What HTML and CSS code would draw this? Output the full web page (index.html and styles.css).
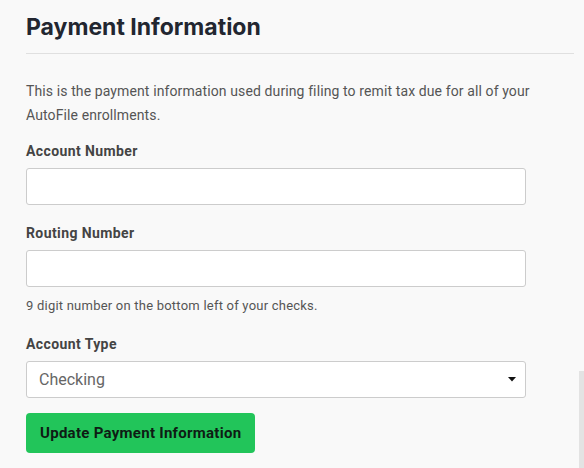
FILE: index.html
```html
<!DOCTYPE html>
<html>
<head>
<meta charset="utf-8">
<link rel="stylesheet" href="styles.css">
</head>
<body>
<div class="page">
  <h1 class="title">Payment Information</h1>
  <hr class="divider">
  <p class="intro">This is the payment information used during filing to remit tax due for all of your AutoFile enrollments.</p>
  <form class="form">
    <div class="field">
      <label class="label">Account Number</label>
      <input class="input" type="text">
    </div>
    <div class="field">
      <label class="label">Routing Number</label>
      <input class="input" type="text">
      <div class="hint">9 digit number on the bottom left of your checks.</div>
    </div>
    <div class="field">
      <label class="label">Account Type</label>
      <div class="select">
        <span class="select-value">Checking</span>
        <svg class="caret" width="8" height="5" viewBox="0 0 8 5"><path d="M0 0H8L4 4.5Z" fill="#111"/></svg>
      </div>
    </div>
    <button class="btn" type="button">Update Payment Information</button>
  </form>
</div>
<div class="scrollbar"></div>
</body>
</html>
```
FILE: styles.css
```css
html, body {
  margin: 0;
  padding: 0;
  background: #f9f9f9;
  height: 100%;
  overflow: hidden;
}
body {
  font-family: "Roboto", "Liberation Sans", sans-serif;
  color: #555;
  position: relative;
}
.page {
  padding: 13px 10px 0 26px;
  width: 548px;
}
.title {
  margin: 0;
  font-family: "Inter", "Roboto", sans-serif;
  font-weight: 700;
  font-size: 23px;
  line-height: 28px;
  color: #222630;
}
.divider {
  margin: 12px 0 0 0;
  border: 0;
  border-top: 1px solid #e0e0e0;
}
.intro {
  margin: 25px 0 0 0;
  width: 530px;
  font-size: 14px;
  letter-spacing: 0.11px;
  line-height: 24px;
  color: #555;
}
.form {
  margin-top: 14px;
}
.field {
  display: flex;
  flex-direction: column;
}
.label {
  font-size: 14px;
  font-weight: 700;
  letter-spacing: 0.4px;
  line-height: 20px;
  color: #444;
  margin-bottom: 7px;
}
.input {
  box-sizing: border-box;
  width: 500px;
  height: 37px;
  margin: 0;
  border: 1px solid #ccc;
  border-radius: 3px;
  background: #fff;
}
.field + .field {
  margin-top: 18px;
}
.hint {
  font-size: 13px;
  letter-spacing: 0.22px;
  line-height: 20px;
  margin-top: 9px;
  color: #555;
}
.select {
  box-sizing: border-box;
  width: 500px;
  height: 37px;
  border: 1px solid #ccc;
  border-radius: 3px;
  background: #fff;
  display: flex;
  align-items: center;
  justify-content: space-between;
  padding: 0 9px 0 12px;
}
.select-value {
  font-size: 16px;
  color: #666;
}
.btn {
  margin-top: 15px;
  height: 40px;
  padding: 0 14px;
  border: 0;
  border-radius: 4px;
  background: #22c55a;
  font-family: "Roboto", sans-serif;
  font-weight: 700;
  font-size: 15px;
  letter-spacing: 0.28px;
  color: #0e1c14;
}
.scrollbar {
  position: absolute;
  right: 0;
  top: 371px;
  width: 5px;
  height: 97px;
  background: #e3e3e3;
}
```
